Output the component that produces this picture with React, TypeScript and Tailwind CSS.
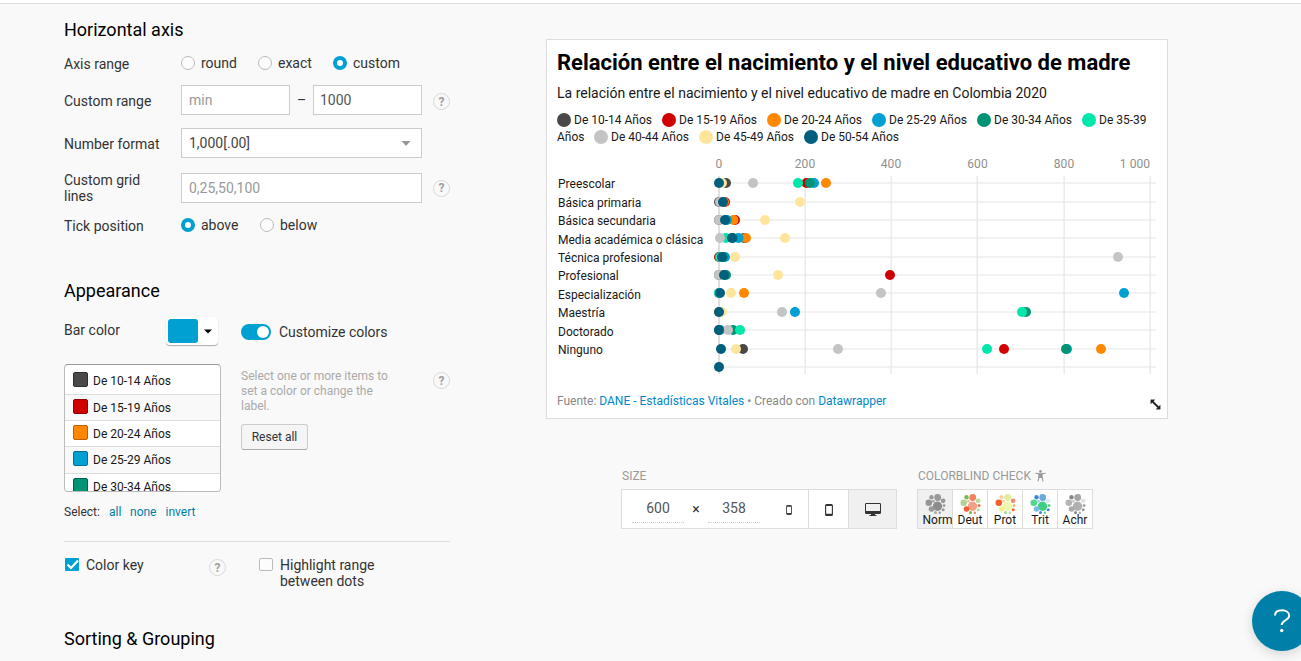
import React from "react";

const C = {
  dark: "#494949",
  red: "#d00000",
  orange: "#ff8800",
  blue: "#00a0d2",
  green: "#009474",
  mint: "#00e7aa",
  silver: "#c4c4c4",
  cream: "#ffe59c",
  navy: "#005f7d",
};

const rows: { label: string; y: number; text: number; dots: [number, string][] }[] = [
  { label: "Preescolar", y: 183, text: 188, dots: [[726, C.dark], [806.5, C.red], [826, C.orange], [814, C.blue], [810, C.green], [798, C.mint], [753, C.silver], [722, C.cream], [719, C.navy]] },
  { label: "Básica primaria", y: 202, text: 207, dots: [[719, C.dark], [725, C.red], [724, C.orange], [720, C.silver], [800, C.cream], [723, C.navy]] },
  { label: "Básica secundaria", y: 220, text: 225, dots: [[719, C.dark], [735, C.red], [733.5, C.orange], [727, C.blue], [719, C.silver], [765, C.cream], [725, C.navy]] },
  { label: "Media académica o clásica", y: 238, text: 244, dots: [[744, C.dark], [746, C.orange], [738.5, C.blue], [733, C.green], [726, C.mint], [720, C.silver], [785, C.cream], [732, C.navy]] },
  { label: "Técnica profesional", y: 257, text: 262, dots: [[719, C.red], [725, C.blue], [723, C.green], [720, C.mint], [1118, C.silver], [735, C.cream], [722, C.navy]] },
  { label: "Profesional", y: 275, text: 280, dots: [[719, C.dark], [890, C.red], [726, C.green], [719, C.silver], [778, C.cream], [724, C.navy]] },
  { label: "Especialización", y: 293, text: 299, dots: [[744, C.orange], [1124, C.blue], [719, C.green], [719, C.mint], [881, C.silver], [731, C.cream], [720, C.navy]] },
  { label: "Maestría", y: 312, text: 317, dots: [[719, C.orange], [795, C.blue], [1026, C.green], [1022, C.mint], [782, C.silver], [722, C.cream], [719, C.navy]] },
  { label: "Doctorado", y: 330, text: 336, dots: [[719, C.dark], [720, C.blue], [733, C.green], [740, C.mint], [728, C.silver], [719, C.navy]] },
  { label: "Ninguno", y: 349, text: 354, dots: [[743, C.dark], [1004, C.red], [1101, C.orange], [1067, C.blue], [1066, C.green], [987, C.mint], [838, C.silver], [736, C.cream], [721, C.navy]] },
  { label: "", y: 367, text: 372, dots: [[719, C.navy]] },
];

const ticks = [
  { x: 719, tx: 719, label: "0" },
  { x: 805, tx: 805, label: "200" },
  { x: 891, tx: 891, label: "400" },
  { x: 977, tx: 977.5, label: "600" },
  { x: 1064, tx: 1064, label: "800" },
  { x: 1150, tx: 1135, label: "1 000" },
];

function Plot() {
  return (
    <svg className="block" width="620" height="230" viewBox="547 150 620 230">
      {rows.map((r) => (
        <rect key={r.y} x="719" y={r.y - 1} width="437" height="2" fill="#f2f2f2" />
      ))}
      {ticks.map((t) => (
        <rect key={t.label} x={t.x - (t.x === 719 ? 1 : 0.5)} y="176" width={t.x === 719 ? 2 : 1.3} height="198" fill={t.x === 719 ? "#dfdfdf" : "#e8e8e8"} />
      ))}
      {ticks.map((t) => (
        <text key={t.label} x={t.tx} y="168" textAnchor="middle" fontSize="12" letterSpacing="0.1" fill="#8f8f8f">
          {t.label}
        </text>
      ))}
      {rows.map((r) => (
        <text key={r.y} x="558" y={r.text} fontSize="12" fill="#181818">
          {r.label}
        </text>
      ))}
      {rows.map((r) => r.dots.map(([x, c], i) => <circle key={r.y + "-" + i} cx={x} cy={r.y} r="5" fill={c} />))}
    </svg>
  );
}

function Help() {
  return (
    <span className="flex size-[17px] shrink-0 items-center justify-center rounded-full border border-[#d8d8d8] text-[12px] font-bold leading-none text-[#a0a0a0]">?</span>
  );
}

function Radio({ label, on, width }: { label: string; on?: boolean; width: string }) {
  return (
    <label className={"flex h-4 items-center gap-1.5 " + width}>
      <span className={on ? "size-3.5 rounded-full border-4 border-[#00a0d2] bg-white" : "size-3.5 rounded-full border border-[#bbb] bg-[#fcfcfc]"} />
      <span>{label}</span>
    </label>
  );
}

const listItems = [
  { label: "De 10-14 Años", swatch: "bg-[#494949] border-[#2d2d2d]", row: "h-[27px] bg-white" },
  { label: "De 15-19 Años", swatch: "bg-[#d00000] border-[#900000]", row: "h-[26px] bg-[#f9f9f9]" },
  { label: "De 20-24 Años", swatch: "bg-[#ff8800] border-[#c06000]", row: "h-[26px] bg-white" },
  { label: "De 25-29 Años", swatch: "bg-[#00a0d2] border-[#007095]", row: "h-[27px] bg-[#f9f9f9]" },
  { label: "De 30-34 Años", swatch: "bg-[#009474] border-[#00604b]", row: "h-[26px] bg-white" },
];

function Controls() {
  return (
    <section className="w-[386px] text-[14px] leading-4 text-[#333]">
      <h2 className="h-[34px] pt-[14px] text-[18px] leading-6 text-black">Horizontal axis</h2>
      <div className="flex h-[47px] pt-[17px]">
        <span className="w-[117px] pt-px">Axis range</span>
        <Radio label="round" width="w-[77px]" />
        <Radio label="exact" width="w-[75px]" />
        <Radio label="custom" on width="w-[80px]" />
      </div>
      <div className="flex h-[30px] items-center">
        <span className="w-[117px] pt-[2px]">Custom range</span>
        <input className="h-[30px] w-[109px] border border-[#ccc] bg-white px-[7px] placeholder:text-[#999]" placeholder="min" readOnly />
        <span className="w-[23px] pb-px text-center">–</span>
        <input className="h-[30px] w-[109px] border border-[#ccc] bg-white px-1.5 text-[#555]" defaultValue="1000" />
        <span className="ml-[11px] mt-[3px]"><Help /></span>
      </div>
      <div className="mt-[13px] flex h-[30px] items-center">
        <span className="w-[117px] pt-[2px]">Number format</span>
        <div className="flex h-[30px] w-[241px] items-center justify-between border border-[#ccc] bg-white pl-[7px] pr-[10px] text-[#444]">
          <span>1,000[.00]</span>
          <svg width="10" height="5" viewBox="0 0 10 5"><path d="M0.5 0h9L5 5z" fill="#999" /></svg>
        </div>
      </div>
      <div className="mt-[15px] flex h-[30px] items-center">
        <span className="w-[117px] pr-6">Custom grid lines</span>
        <input className="h-[30px] w-[241px] border border-[#ccc] bg-white px-[7px] placeholder:text-[#999]" placeholder="0,25,50,100" readOnly />
        <span className="ml-[11px]"><Help /></span>
      </div>
      <div className="flex h-[61px] pt-[14px]">
        <span className="w-[117px] pt-px">Tick position</span>
        <Radio label="above" on width="w-[79px]" />
        <Radio label="below" width="w-[70px]" />
      </div>

      <h2 className="mt-[15px] h-[38px] text-[18px] leading-6 text-black">Appearance</h2>
      <div className="flex h-[30px]">
        <span className="w-[102px] pt-[5px]">Bar color</span>
        <div className="flex h-7 w-[52px] items-center gap-1.5 rounded bg-white pl-[2px] shadow-[0_1px_1px_#aaa]">
          <span className="h-6 w-[30px] rounded-[3px] bg-[#00a0d2]" />
          <svg width="8" height="5" viewBox="0 0 8 5"><path d="M0 0.5h8L4 4.5z" fill="#000" /></svg>
        </div>
        <div className="ml-[23px] flex h-[30px] items-center gap-2">
          <span className="flex h-4 w-[30px] items-center justify-end rounded-full bg-[#00a0d2] pr-[2px]">
            <span className="size-3 rounded-full bg-white" />
          </span>
          <span>Customize colors</span>
        </div>
      </div>
      <div className="mt-[17px] flex h-32">
        <div className="h-32 w-[157px] overflow-hidden rounded border border-[#bbb] border-t-[#999] bg-white text-[12px] text-[#181818]">
          <div className="h-[3px]" />
          {listItems.map((it) => (
            <div key={it.label} className={"flex gap-[5px] border-b border-[#ddd] pl-2 pt-1 " + it.row}>
              <span className={"size-[15px] rounded-[2px] border " + it.swatch} />
              <span className="pt-[1px]">{it.label}</span>
            </div>
          ))}
        </div>
        <div className="ml-5 w-[155px] pt-[5px]">
          <p className="text-[12px] leading-[15px] text-[#aaa]">Select one or more items to set a color or change the label.</p>
          <button className="mt-[10px] h-[26px] w-[67px] rounded-[3px] border border-[#ccc] border-b-[#aaa] bg-[#f5f5f5] text-[12px] text-[#333]">Reset all</button>
        </div>
        <span className="ml-auto mt-2"><Help /></span>
      </div>
      <div className="mt-3 flex h-[37px] text-[12px] text-[#007fa8]">
        <span className="w-[45px] text-[#333]">Select:</span>
        <span className="w-[21px]">all</span>
        <span className="w-[35.5px]">none</span>
        <span>invert</span>
      </div>
      <div className="flex h-[86px] border-t border-[#ddd] pt-[15px]">
        <span className="ml-px mt-px flex h-[13px] w-[14px] items-center justify-center rounded-[1px] bg-[#00a0d2]">
          <svg width="13" height="11" viewBox="0 0 13 11"><path d="M1.5 5.5L5 9 12 1.5" fill="none" stroke="#fff" strokeWidth="2.2" /></svg>
        </span>
        <span className="ml-[7px] w-[123px]">Color key</span>
        <span className="pt-[2px]"><Help /></span>
        <span className="ml-[33px] mt-px h-[13px] w-[14px] rounded-[2px] border border-[#bbb] bg-[#fcfcfc]" />
        <span className="ml-[7px] w-[110px]">Highlight range between dots</span>
      </div>
      <h2 className="text-[18px] leading-6 text-black">Sorting &amp; Grouping</h2>
    </section>
  );
}

function LegendItem({ color, label, width }: { color: string; label: string; width: string }) {
  return (
    <span className={"flex shrink-0 gap-[3px] " + width}>
      <span className={"mt-px size-3.5 rounded-full " + color} />
      <span>{label}</span>
    </span>
  );
}

function Chart() {
  return (
    <article className="relative h-[380px] w-[622px] border border-[#ddd] bg-white">
      <div className="h-[110px] whitespace-nowrap px-[10px]">
        <h1 className="pt-[9px] text-[22px] font-bold leading-7 text-black">Relación entre el nacimiento y el nivel educativo de madre</h1>
        <p className="mt-2 text-[14px] leading-4 text-[#181818]">La relación entre el nacimiento y el nivel educativo de madre en Colombia 2020</p>
        <div className="mt-[11px] flex h-[17px] text-[12px] leading-4 text-[#181818]">
          <LegendItem color="bg-[#494949]" label="De 10-14 Años" width="w-[105px]" />
          <LegendItem color="bg-[#d00000]" label="De 15-19 Años" width="w-[105px]" />
          <LegendItem color="bg-[#ff8800]" label="De 20-24 Años" width="w-[105px]" />
          <LegendItem color="bg-[#00a0d2]" label="De 25-29 Años" width="w-[105px]" />
          <LegendItem color="bg-[#009474]" label="De 30-34 Años" width="w-[105px]" />
          <LegendItem color="bg-[#00e7aa]" label="De 35-39" width="w-[75px]" />
        </div>
        <div className="flex h-[17px] text-[12px] leading-4 text-[#181818]">
          <span className="w-[37px]">Años</span>
          <LegendItem color="bg-[#c4c4c4]" label="De 40-44 Años" width="w-[105px]" />
          <LegendItem color="bg-[#ffe59c]" label="De 45-49 Años" width="w-[105px]" />
          <LegendItem color="bg-[#005f7d]" label="De 50-54 Años" width="w-[105px]" />
        </div>
      </div>
      <Plot />
      <p className="px-[10px] pt-[13px] text-[12px] leading-4 text-[#888]">
        Fuente: <a className="text-[#0088cc]">DANE - Estadísticas Vitales</a> • Creado con <a className="text-[#0088cc]">Datawrapper</a>
      </p>
      <svg className="absolute bottom-2 right-[6px]" width="11" height="11" viewBox="0 0 11 11">
        <path d="M0.8 0.8h4L3.400 2.200 8.800 7.600 10.200 6.200v4h-4L7.600 8.800 2.200 3.400 0.800 4.800z" fill="#222" stroke="#222" strokeWidth="0.400" />
      </svg>
    </article>
  );
}

const bubbleSpots = [
  [12, 12.2, 4.7], [12.2, 3.5, 3.4], [3.3, 8.8, 3.3], [6, 15, 2.8], [6, 3.3, 2.2], [17.6, 6.8, 2.4],
  [18.6, 11.6, 1.4], [17.7, 15.8, 1.5], [10, 18.6, 1.5], [14.3, 18.7, 1.2], [7.9, 7.2, 1.5],
];

function BubbleIcon({ colors }: { colors: string[] }) {
  return (
    <svg width="21" height="20" viewBox="0 0 20 20">
      {bubbleSpots.map(([x, y, r], i) => (
        <circle key={i} cx={x} cy={y} r={r} fill={colors[i]} />
      ))}
    </svg>
  );
}

const checks = [
  { label: "Norm", colors: ["#8c8c8c", "#999", "#959595", "#999", "#999", "#999", "#999", "#999", "#aaa", "#999", "#aaa"] },
  { label: "Deut", colors: ["#f2a08a", "#f58060", "#b5d09a", "#f06030", "#7ab850", "#b5dc9a", "#f06030", "#b5dc9a", "#7ab850", "#f58060", "#f8c0a8"] },
  { label: "Prot", colors: ["#eef9a8", "#e0ee9a", "#f06030", "#f4ee90", "#ffd0a0", "#f09070", "#f5b060", "#f06030", "#a8d890", "#b5dc9a", "#ffd0a0"] },
  { label: "Trit", colors: ["#3ed080", "#6aa8dc", "#50d890", "#80b8e4", "#4088d0", "#dce8f4", "#40d080", "#4088d0", "#4088d0", "#50d890", "#a0c8ec"] },
  { label: "Achr", colors: ["#b0b0b0", "#a4a4a4", "#b4b4b4", "#aaa", "#888", "#e4e4e4", "#999", "#999", "#888", "#aaa", "#ccc"] },
];

function Phone({ tall }: { tall?: boolean }) {
  return (
    <svg width={tall ? 8 : 6} height={tall ? 12 : 10} viewBox="0 0 8 12" preserveAspectRatio="none">
      <rect x="0.6" y="0.6" width="6.8" height="10.8" rx="1" fill="#fff" stroke="#333" strokeWidth="1.1" />
      <path d="M1 1.3h6M1 10.4h6" stroke="#333" strokeWidth="1.5" />
    </svg>
  );
}

function Toolbar() {
  return (
    <div className="ml-[75px] mt-[49px] flex gap-5 text-[12px] leading-4 text-[#999]">
      <div className="w-[276px]">
        <div className="h-[21px] pl-px">SIZE</div>
        <div className="flex h-10 border border-[#ddd] bg-white">
          <div className="flex w-[186px] text-[14px] text-[#555]">
            <span className="ml-[10px] h-[33px] w-[52px] border-b border-dotted border-[#ccc] pt-[10px] text-center">600</span>
            <span className="w-6 pt-[11px] text-center text-[#333]">×</span>
            <span className="h-[33px] w-[52px] border-b border-dotted border-[#ccc] pt-[10px] text-center">358</span>
            <span className="ml-[26px] flex items-center pt-px"><Phone /></span>
          </div>
          <div className="flex w-10 items-center justify-center border-l border-[#ddd] pt-px"><Phone tall /></div>
          <div className="flex w-12 items-center justify-center border-l border-[#ddd] bg-[#f0f0f0]">
            <svg width="16" height="13" viewBox="0 0 16 13">
              <path d="M1.300 0h13.400Q16 0 16 1.300v8.400Q16 11 14.700 11H10v1h1.500v1h-7v-1H6v-1H1.300Q0 11 0 9.700V1.300Q0 0 1.300 0zM1 1v7h14V1z" fill="#333" fillRule="evenodd" />
            </svg>
          </div>
        </div>
      </div>
      <div className="w-[176px]">
        <div className="flex h-[21px] gap-1 pl-px">
          <span>COLORBLIND CHECK</span>
          <svg className="mt-[2px]" width="11" height="12" viewBox="0 0 11 12">
            <circle cx="5.500" cy="1.400" r="1.300" fill="#999" />
            <path d="M0.500 3.200L4 3.800v3L3 11.500M10.500 3.200L7 3.800v3l1 4.700" fill="none" stroke="#999" strokeWidth="1.100" />
            <path d="M3.700 3.300h3.600V8H3.700z" fill="#999" />
          </svg>
        </div>
        <div className="flex h-10 border border-[#ddd] bg-white text-[#181818]">
          {checks.map((c, i) => (
            <div key={c.label} className={"flex flex-col items-center pt-[4px] " + (i === 0 ? "w-[34px] bg-[#f0f0f0]" : "w-[35px] border-l border-[#ddd]")}>
              <BubbleIcon colors={c.colors} />
              <span className={"-mt-px leading-[14px] " + (i === 0 ? "pl-[5px]" : "")}>{c.label}</span>
            </div>
          ))}
        </div>
      </div>
    </div>
  );
}

export default function App() {
  return (
    <div className="relative flex h-[661px] w-[1301px] flex-col overflow-hidden bg-[#f9f9f9] font-['Roboto',sans-serif]">
      <div className="h-1 shrink-0 border-b border-[#ddd] bg-white" />
      <main className="flex pl-16">
        <Controls />
        <div className="ml-24 pt-[35px]">
          <Chart />
          <Toolbar />
        </div>
      </main>
      <button className="absolute left-[1252px] top-[591px] flex size-[60px] items-center justify-center rounded-full bg-[#0080a8] shadow-[0_3px_12px_rgba(0,0,0,0.15)]">
        <svg width="20" height="26" viewBox="0 0 20 26">
          <path d="M3 7.500C3 4 6 2.200 10 2.200s7.200 2.200 7.200 5.500c0 4.800-7.500 4.300-7.500 9.300" fill="none" stroke="#fff" strokeWidth="1.900" />
          <circle cx="9.700" cy="22.500" r="1.700" fill="#fff" />
        </svg>
      </button>
    </div>
  );
}
